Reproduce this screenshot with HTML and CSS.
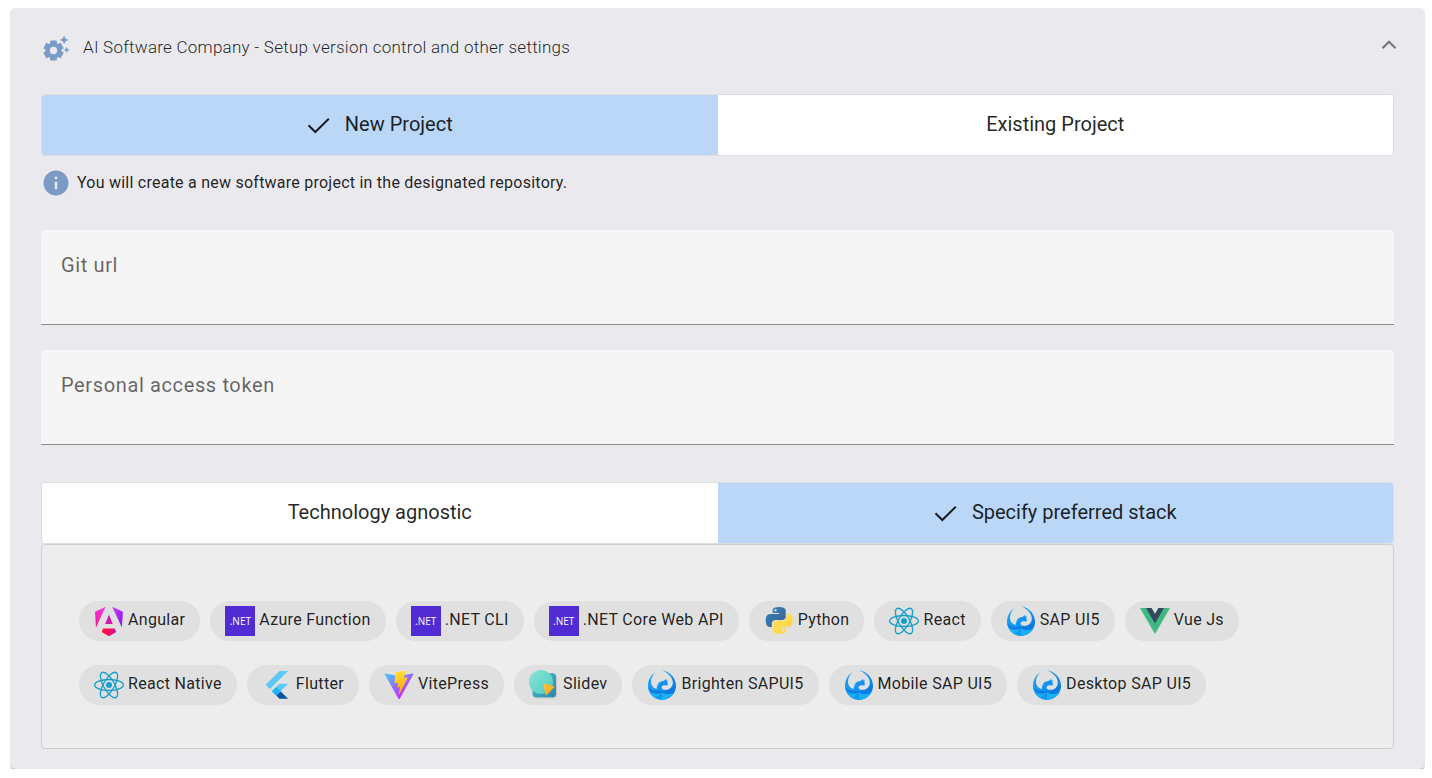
FILE: index.html
```html
<!DOCTYPE html>
<html lang="en">
<head>
<meta charset="utf-8">
<title>AI Software Company</title>
<link rel="stylesheet" href="styles.css">
</head>
<body>
<svg class="defs" aria-hidden="true">
  <defs>
    <linearGradient id="ng-b" x1="0.7" y1="0" x2="0.2" y2="1"><stop offset="0" stop-color="#f03be0"/><stop offset="0.5" stop-color="#f32bbd"/><stop offset="1" stop-color="#f6118a"/></linearGradient>
    <linearGradient id="ng-c" x1="0" y1="0" x2="1" y2="1"><stop offset="0" stop-color="#d33bf5"/><stop offset="1" stop-color="#8514f5"/></linearGradient>
    <linearGradient id="ng-d" x1="0" y1="0" x2="1" y2="0"><stop offset="0" stop-color="#ff1030"/><stop offset="0.45" stop-color="#fa0f55"/><stop offset="1" stop-color="#c416a0"/></linearGradient>
    <linearGradient id="ng-e" x1="0" y1="0" x2="1" y2="1"><stop offset="0" stop-color="#b81ad8"/><stop offset="1" stop-color="#e0189a"/></linearGradient>
    <linearGradient id="py-a" x1="0.1" y1="0.1" x2="0.8" y2="0.8"><stop offset="0" stop-color="#387eb8"/><stop offset="1" stop-color="#366994"/></linearGradient>
    <linearGradient id="py-b" x1="0.2" y1="0.2" x2="0.9" y2="0.9"><stop offset="0" stop-color="#ffe052"/><stop offset="1" stop-color="#ffd23f"/></linearGradient>
    <linearGradient id="vite-a" gradientUnits="userSpaceOnUse" x1="6" y1="33" x2="235" y2="344"><stop offset="0" stop-color="#41d1ff"/><stop offset="1" stop-color="#bd34fe"/></linearGradient>
    <linearGradient id="vite-b" gradientUnits="userSpaceOnUse" x1="194" y1="9" x2="236" y2="293"><stop offset="0" stop-color="#ffea83"/><stop offset="0.083" stop-color="#ffdd35"/><stop offset="1" stop-color="#ffa800"/></linearGradient>
    <linearGradient id="sli-a" x1="0" y1="0" x2="1" y2="1"><stop offset="0" stop-color="#4dc5c4"/><stop offset="1" stop-color="#2a86b0"/></linearGradient>
    <linearGradient id="sli-b" x1="0" y1="0" x2="1" y2="1"><stop offset="0" stop-color="#8ce5d5"/><stop offset="1" stop-color="#4dcac2"/></linearGradient>
    <linearGradient id="sli-c" x1="0" y1="0" x2="1" y2="1"><stop offset="0" stop-color="#ffc33c"/><stop offset="1" stop-color="#f9a411"/></linearGradient>
    <linearGradient id="ui5-a" x1="0" y1="0" x2="1" y2="0.7"><stop offset="0" stop-color="#1aa3f5"/><stop offset="0.5" stop-color="#1596f2"/><stop offset="1" stop-color="#0a7de6"/></linearGradient>
  </defs>
  <symbol id="i-angular" viewBox="-8 -6 239 239">
    <path fill="url(#ng-c)" d="m222.077 39.192-8.019 125.923L137.387 0l84.69 39.192Z"/>
    <path fill="url(#ng-d)" d="m168.972 202.017-57.933 33.056-57.934-33.056 11.783-28.556h92.301l11.783 28.556Z"/>
    <path fill="url(#ng-e)" d="m111.039 62.675 30.357 73.803H80.681l30.358-73.803Z"/>
    <path fill="url(#ng-b)" d="M7.937 165.115 0 39.192 84.69 0 7.937 165.115Z"/>
  </symbol>
  <symbol id="i-python" viewBox="-16 -9 284 284">
    <path fill="url(#py-a)" d="M126.916.072c-64.832 0-60.784 28.115-60.784 28.115l.072 29.128h61.868v8.745H41.631S.145 61.355.145 126.77c0 65.417 36.21 63.097 36.21 63.097h21.61v-30.356s-1.165-36.21 35.632-36.21h61.362s34.475.557 34.475-33.319V33.97S194.67.072 126.916.072zM92.802 19.66a11.12 11.12 0 0 1 11.13 11.13 11.12 11.12 0 0 1-11.13 11.13 11.12 11.12 0 0 1-11.13-11.13 11.12 11.12 0 0 1 11.13-11.13z"/>
    <path fill="url(#py-b)" d="M128.757 254.126c64.832 0 60.784-28.115 60.784-28.115l-.072-29.127H127.6v-8.745h86.441s41.486 4.705 41.486-60.712c0-65.416-36.21-63.096-36.21-63.096h-21.61v30.355s1.165 36.21-35.632 36.21h-61.362s-34.475-.557-34.475 33.32v56.013s-5.235 33.897 62.518 33.897zm34.114-19.586a11.12 11.12 0 0 1-11.13-11.13 11.12 11.12 0 0 1 11.13-11.131 11.12 11.12 0 0 1 11.13 11.13 11.12 11.12 0 0 1-11.13 11.13z"/>
  </symbol>
  <symbol id="i-react" viewBox="-11.5 -11.5 23 23">
    <circle r="2.3" fill="#149eca"/>
    <g fill="none" stroke="#149eca">
      <ellipse rx="11" ry="4.2"/>
      <ellipse rx="11" ry="4.2" transform="rotate(60)"/>
      <ellipse rx="11" ry="4.2" transform="rotate(120)"/>
    </g>
  </symbol>
  <symbol id="i-ui5" viewBox="0 0 30 30">
    <path fill="url(#ui5-a)" d="M8.500 2.200C3.800 5.200 1 10 1 15.800C1 23.800 7.300 29.800 15 29.800S29 23.800 29 15.800C29 8.200 23.500 2.200 15 0C21.800 3.600 25.800 7.600 25.800 12.400C25.800 17 22.400 19.800 18.200 19.800C16.200 19.800 14.600 19 14.600 17.400C14.600 15.800 16.200 15.200 18.400 15.200L20.200 15.600L21.200 14.200L19.800 13L21.400 12.200L20 11.600L21 9.400L18.800 10.800L19.200 8.800L16.500 10.900C14 11.300 11.800 12 10.600 13.600L12.300 13.400L9.300 15.700L11.300 15.500C9.900 16.600 9.400 17.600 9.800 19C6.400 18.400 4.300 16 4 12.600C3.700 8.600 5.400 4.800 8.500 2.200Z"/>
    <path fill="#0b78de" d="M1.100 17C3.500 20.600 8 21.800 13.500 21C19 22.200 25.800 20.300 28.900 14.600C29.200 20 25 23.600 19.500 23.400L15 22.600L9.800 23C5.300 23 2 21 1.100 17Z"/>
    <path fill="#1bb0f5" d="M3 23C7 24.600 11.600 24.600 15 22.400C18.600 24.600 23 24.600 27 23C24.200 27.400 19.800 29.800 15 29.800S5.800 27.400 3 23Z"/>
    <path fill="#0d98ee" d="M15 22.400L8.600 28L15 29.800Z"/>
  </symbol>
  <symbol id="i-vue" viewBox="0 0 262 227">
    <path fill="#41b883" d="M161.096.001l-30.225 52.351L100.647.001H-.005l130.877 226.688L261.749.001z"/>
    <path fill="#34495e" d="M161.096.001l-30.225 52.351L100.647.001H52.346l78.526 136.01L209.398.001z"/>
  </symbol>
  <symbol id="i-flutter" viewBox="-42 -12 343 343">
    <path fill="#5bc8f8" d="M157.666 0 0 157.666l48.8 48.8L255.268 0zM156.567 145.397l-84.418 84.418 48.984 49.716 48.709-48.71 85.426-85.424z"/>
    <path fill="#00569e" d="m121.133 279.531 37.081 37.081h97.054l-85.426-85.791z"/>
    <path fill="#17b6f6" d="m71.6 230.364 48.801-48.802 49.441 49.259-48.709 48.71z"/>
  </symbol>
  <symbol id="i-vite" viewBox="0 0 410 404">
    <path fill="url(#vite-a)" d="M399.641 59.5246L215.643 388.545C211.844 395.338 202.084 395.378 198.228 388.618L10.5817 59.5563C6.38087 52.1896 12.6802 43.2665 21.0281 44.7586L205.223 77.6824C206.398 77.8924 207.601 77.8904 208.776 77.6763L389.119 44.8058C397.439 43.2894 403.768 52.1434 399.641 59.5246Z"/>
    <path fill="url(#vite-b)" d="M292.965 1.5744L156.801 28.2552C154.563 28.6937 152.906 30.5903 152.771 32.8664L144.395 174.33C144.198 177.662 147.258 180.248 150.51 179.498L188.42 170.749C191.967 169.931 195.172 173.055 194.443 176.622L183.18 231.775C182.422 235.487 185.907 238.661 189.532 237.56L212.947 230.446C216.577 229.344 220.065 232.527 219.297 236.242L201.398 322.875C200.278 328.294 207.486 331.249 210.492 326.603L212.5 323.5L323.454 102.072C325.312 98.3645 322.108 94.137 318.036 94.9228L279.014 102.454C275.347 103.161 272.227 99.746 273.262 96.1583L298.731 7.86689C299.767 4.27314 296.636 0.855181 292.965 1.5744Z"/>
  </symbol>
  <symbol id="i-slidev" viewBox="0 0 30 30">
    <rect x="4" y="4" width="24" height="24.500" rx="3.500" fill="#000" opacity="0.1"/>
    <rect x="3.500" y="3.300" width="23.500" height="24" rx="3.500" fill="url(#sli-a)"/>
    <circle cx="12" cy="12" r="12" fill="url(#sli-b)"/>
    <path fill="url(#sli-c)" d="M15.200 13.500L24.400 15.900Q25.800 16.500 24.900 17.600L18.200 24.700Q17 25.600 16.600 24.200L14.200 14.700Q14.100 13.500 15.200 13.500Z"/>
  </symbol>
  <symbol id="i-check" viewBox="0 0 24 24">
    <path fill="none" stroke="currentColor" stroke-width="2" d="M1.500 13.300L8.300 20L21.800 6.700"/>
  </symbol>
</svg>

<main class="card">
  <button class="header" type="button" aria-expanded="true">
    <svg class="header-icon" viewBox="0 0 24 24" aria-hidden="true"><path fill="currentColor" d="M17.41 6.59L15 5.5l2.41-1.09L18.5 2l1.09 2.41L22 5.5l-2.41 1.09L18.5 9l-1.09-2.41zm3.87 6.13L20.5 11l-.78 1.72-1.72.78 1.72.78.78 1.72.78-1.72L23 13.5l-1.72-.78zm-5.04 1.65l1.94 1.47-2.5 4.33-2.24-.94c-.2.13-.42.26-.64.37l-.3 2.4h-5l-.3-2.41c-.22-.11-.43-.23-.64-.37l-2.24.94-2.5-4.33 1.94-1.47c-.01-.11-.01-.24-.01-.36s0-.25.01-.37l-1.94-1.47 2.5-4.33 2.24.94c.2-.13.42-.26.64-.37L7.5 6h5l.3 2.41c.22.11.43.23.64.37l2.24-.94 2.5 4.33-1.94 1.47c.01.12.01.24.01.37s0 .24-.01.36zM13 14c0-1.66-1.34-3-3-3s-3 1.34-3 3 1.34 3 3 3 3-1.34 3-3z"/></svg>
    <span class="header-title">AI Software Company - Setup version control and other settings</span>
    <svg class="chevron" viewBox="0 0 16 16" aria-hidden="true"><path fill="none" stroke="currentColor" stroke-width="2" d="M1.500 8.200L8 1.700L14.500 8.200"/></svg>
  </button>

  <div class="toggle" role="group" aria-label="Project type">
    <button class="toggle-option toggle-option-on" type="button" aria-pressed="true"><svg class="check" aria-hidden="true"><use href="#i-check"/></svg>New Project</button>
    <button class="toggle-option" type="button" aria-pressed="false">Existing Project</button>
  </div>

  <p class="info">
    <svg class="header-icon" viewBox="0 0 24 24" aria-hidden="true"><path fill="currentColor" d="M12 2C6.480 2 2 6.480 2 12s4.480 10 10 10 10-4.480 10-10S17.520 2 12 2zm1 15h-2v-6h2v6zm0-8h-2V7h2v2z"/></svg>
    <span class="info-text">You will create a new software project in the designated repository.</span>
  </p>

  <div class="fields">
    <div class="field">
      <label for="git-url">Git url</label>
      <input id="git-url" type="text">
    </div>
    <div class="field">
      <label for="token">Personal access token</label>
      <input id="token" type="text">
    </div>
  </div>

  <div class="toggle" role="group" aria-label="Technology">
    <button class="toggle-option" type="button" aria-pressed="false">Technology agnostic</button>
    <button class="toggle-option toggle-option-on" type="button" aria-pressed="true"><svg class="check" aria-hidden="true"><use href="#i-check"/></svg>Specify preferred stack</button>
  </div>

  <div class="stack">
    <button class="chip" type="button"><svg class="chip-icon" aria-hidden="true"><use href="#i-angular"/></svg><span class="chip-label">Angular</span></button>
    <button class="chip" type="button"><span class="chip-icon net" aria-hidden="true">.NET</span><span class="chip-label">Azure Function</span></button>
    <button class="chip" type="button"><span class="chip-icon net" aria-hidden="true">.NET</span><span class="chip-label">.NET CLI</span></button>
    <button class="chip" type="button"><span class="chip-icon net" aria-hidden="true">.NET</span><span class="chip-label">.NET Core Web API</span></button>
    <button class="chip" type="button"><svg class="chip-icon" aria-hidden="true"><use href="#i-python"/></svg><span class="chip-label">Python</span></button>
    <button class="chip" type="button"><svg class="chip-icon" aria-hidden="true"><use href="#i-react"/></svg><span class="chip-label">React</span></button>
    <button class="chip" type="button"><svg class="chip-icon" aria-hidden="true"><use href="#i-ui5"/></svg><span class="chip-label">SAP UI5</span></button>
    <button class="chip" type="button"><svg class="chip-icon" aria-hidden="true"><use href="#i-vue"/></svg><span class="chip-label">Vue Js</span></button>
    <button class="chip" type="button"><svg class="chip-icon" aria-hidden="true"><use href="#i-react"/></svg><span class="chip-label">React Native</span></button>
    <button class="chip" type="button"><svg class="chip-icon" aria-hidden="true"><use href="#i-flutter"/></svg><span class="chip-label">Flutter</span></button>
    <button class="chip" type="button"><svg class="chip-icon" aria-hidden="true"><use href="#i-vite"/></svg><span class="chip-label">VitePress</span></button>
    <button class="chip" type="button"><svg class="chip-icon" aria-hidden="true"><use href="#i-slidev"/></svg><span class="chip-label">Slidev</span></button>
    <button class="chip" type="button"><svg class="chip-icon" aria-hidden="true"><use href="#i-ui5"/></svg><span class="chip-label">Brighten SAPUI5</span></button>
    <button class="chip" type="button"><svg class="chip-icon" aria-hidden="true"><use href="#i-ui5"/></svg><span class="chip-label">Mobile SAP UI5</span></button>
    <button class="chip" type="button"><svg class="chip-icon" aria-hidden="true"><use href="#i-ui5"/></svg><span class="chip-label">Desktop SAP UI5</span></button>
  </div>
</main>
</body>
</html>
```
FILE: styles.css
```css
* { box-sizing: border-box; }

body {
  margin: 8px 7px 8px 10px;
  background: #fff;
  color: rgba(0, 0, 0, 0.87);
  font-family: Roboto, "Liberation Sans", sans-serif;
}

button, input {
  font: inherit;
  color: inherit;
}

.defs {
  position: absolute;
  width: 0;
  height: 0;
}

.card {
  padding: 0 31px 20px;
  border-radius: 6px;
  background: #eae9ee;
  box-shadow: 0 3px 1px -2px rgba(0, 0, 0, 0.2), 0 2px 2px 0 rgba(0, 0, 0, 0.14), 0 1px 5px 0 rgba(0, 0, 0, 0.12);
}

.header {
  display: flex;
  align-items: center;
  gap: 12px;
  width: 100%;
  padding: 25px 0 31px;
  border: 0;
  background: none;
  text-align: left;
  cursor: pointer;
}

.header-icon {
  flex: none;
  width: 30px;
  height: 30px;
  color: #7b9ac5;
}

.header-title {
  flex: 1;
  padding-bottom: 2px;
  font-size: 17px;
  font-weight: 300;
  line-height: 28px;
  letter-spacing: 0.015em;
}

.chevron {
  width: 16px;
  height: 16px;
  margin-right: -3px;
  color: #757575;
}

.toggle {
  display: grid;
  grid-template-columns: 1fr 1fr;
  overflow: hidden;
  border: 1px solid #dddde0;
  border-radius: 4px;
}

.toggle-option {
  display: flex;
  align-items: center;
  justify-content: center;
  gap: 14px;
  height: 60px;
  padding: 0 12px 2px;
  border: 0;
  background: #fff;
  font-size: 20px;
}

.toggle-option-on { background: #bad7f7; }

.check {
  width: 24px;
  height: 24px;
}

.info {
  display: flex;
  align-items: center;
  gap: 6px;
  margin: 12px 0 32px;
  font-size: 16px;
  letter-spacing: 0.015em;
}

.info-text { padding-bottom: 2px; }

.fields {
  display: grid;
  gap: 25px;
  margin-bottom: 37px;
}

.field {
  display: grid;
  padding: 23px 20px 10px;
  border-bottom: 1px solid #8c8c8c;
  border-radius: 4px 4px 0 0;
  background: #f5f5f5;
}

.field label {
  color: rgba(0, 0, 0, 0.6);
  font-size: 20px;
  line-height: 24px;
  letter-spacing: 0.03125em;
}

.field input {
  width: 100%;
  height: 37px;
  padding: 0;
  border: 0;
  outline: 0;
  background: transparent;
  font-size: 20px;
}

.stack {
  display: flex;
  flex-wrap: wrap;
  gap: 24px 10px;
  padding: 56px 37px 43px;
  border: 1px solid #cfcfcf;
  border-radius: 4px;
  background: #ededed;
}

.chip {
  display: flex;
  align-items: center;
  gap: 4px;
  height: 40px;
  padding: 0 15px;
  border: 0;
  border-radius: 20px;
  background: #e0e0e0;
  font-size: 16px;
  letter-spacing: 0.02em;
}

.chip-label { padding-bottom: 3px; }

.chip-icon {
  flex: none;
  width: 30px;
  height: 30px;
}

.net {
  background: #512bd4;
  color: #fff;
  font-family: "Open Sans", sans-serif;
  font-size: 10px;
  line-height: 30px;
  letter-spacing: normal;
  text-align: center;
}
```
